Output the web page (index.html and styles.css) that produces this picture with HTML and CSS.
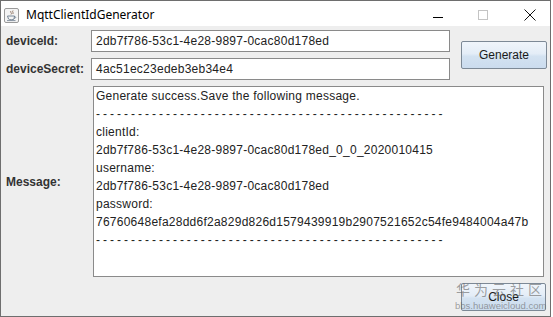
FILE: index.html
```html
<!DOCTYPE html>
<html>
<head>
<meta charset="utf-8">
<link rel="stylesheet" href="styles.css">
</head>
<body>
<div class="window">
  <div class="titlebar">
    <span class="app-icon">
      <svg width="15" height="15" viewBox="0 0 15 15">
        <rect x="0.5" y="0.5" width="14" height="14" rx="1.5" fill="#f4f4f4" stroke="#9a9a9a"/>
        <path d="M7 3 C5.5 4.2 8.5 5 7 6.5 M9 2.5 C7.8 3.8 10 4.6 8.8 6" fill="none" stroke="#8a6d5a" stroke-width="0.9"/>
        <path d="M3.5 8 L10.5 8 L10 11 C9.5 12 5 12 4.5 11 Z" fill="none" stroke="#6a7a8c" stroke-width="0.9"/>
        <path d="M10.4 8.6 C12.2 8.4 12.2 10.2 10.1 10.3" fill="none" stroke="#6a7a8c" stroke-width="0.8"/>
        <path d="M3 12.6 L11.5 12.6" stroke="#6a7a8c" stroke-width="0.8"/>
      </svg>
    </span>
    <span class="title">MqttClientIdGenerator</span>
    <div class="controls">
      <span class="ctl">
        <svg width="10" height="10" viewBox="0 0 10 10"><path d="M0 5.5 H10" stroke="#000" stroke-width="1"/></svg>
      </span>
      <span class="ctl">
        <svg width="10" height="10" viewBox="0 0 10 10"><rect x="0.5" y="0.5" width="9" height="9" fill="none" stroke="#c4c4c4" stroke-width="1"/></svg>
      </span>
      <span class="ctl">
        <svg width="12" height="12" viewBox="0 0 12 12"><path d="M0.5 0.5 L11.5 11.5 M11.5 0.5 L0.5 11.5" stroke="#111" stroke-width="1"/></svg>
      </span>
    </div>
  </div>
  <div class="content">
    <label class="lbl row1">deviceId:</label>
    <div class="field row1">2db7f786-53c1-4e28-9897-0cac80d178ed</div>
    <button class="btn gen">Generate</button>
    <label class="lbl row2">deviceSecret:</label>
    <div class="field row2">4ac51ec23edeb3eb34e4</div>
    <label class="lbl row3">Message:</label>
    <div class="textarea">
      <div class="line">Generate success.Save the following message.</div>
      <div class="line dash">- - - - - - - - - - - - - - - - - - - - - - - - - - - - - - - - - - - - - - - - - - - - - - - - - -</div>
      <div class="line">clientId:</div>
      <div class="line">2db7f786-53c1-4e28-9897-0cac80d178ed_0_0_2020010415</div>
      <div class="line">username:</div>
      <div class="line">2db7f786-53c1-4e28-9897-0cac80d178ed</div>
      <div class="line">password:</div>
      <div class="line">76760648efa28dd6f2a829d826d1579439919b2907521652c54fe9484004a47b</div>
      <div class="line dash">- - - - - - - - - - - - - - - - - - - - - - - - - - - - - - - - - - - - - - - - - - - - - - - - - -</div>
    </div>
    <button class="btn close">Close</button>
  </div>
  <div class="watermark">
    <div class="wm-cn">华为云社区</div>
    <div class="wm-url">bbs.huaweicloud.com</div>
  </div>
</div>
</body>
</html>
```

FILE: styles.css
```css
html, body {
  margin: 0;
  padding: 0;
  background: #ffffff;
}

.window {
  position: relative;
  width: 551px;
  height: 317px;
  box-sizing: border-box;
  border: 1px solid #6e6e6e;
  background: #eeeeee;
  overflow: hidden;
}

.titlebar {
  height: 25px;
  background: #ffffff;
  display: flex;
  align-items: center;
}

.app-icon {
  width: 15px;
  height: 15px;
  margin-left: 3px;
  margin-top: 4px;
  display: flex;
}

.title {
  margin-left: 7px;
  margin-top: 2px;
  font-family: "Noto Sans", "Open Sans", sans-serif;
  font-size: 12px;
  color: #000000;
}

.controls {
  margin-left: auto;
  display: flex;
  height: 25px;
}

.ctl {
  width: 45px;
  height: 25px;
  display: flex;
  align-items: center;
  justify-content: center;
  padding-top: 3px;
  box-sizing: border-box;
}

.ctl:first-child {
  padding-top: 6px;
}

.ctl:last-child {
  padding-left: 4px;
}

.content {
  display: grid;
  grid-template-columns: 74px 359px 86px;
  grid-template-rows: 22px 22px 191px 28px;
  column-gap: 11px;
  row-gap: 6px;
  padding: 4px 0 0 5px;
  font-family: "Liberation Sans", Arial, sans-serif;
  font-size: 12px;
  color: #333333;
}

.lbl {
  grid-column: 1;
  font-weight: bold;
  align-self: center;
  white-space: nowrap;
  color: #333333;
}

.row1 { grid-row: 1; }
.row2 { grid-row: 2; }
.row3 { grid-row: 3; }

.field {
  grid-column: 2;
  background: #ffffff;
  border: 1px solid #8a8a8a;
  box-sizing: border-box;
  padding: 0 4px;
  display: flex;
  align-items: center;
  letter-spacing: 0.25px;
  color: #222222;
}

.btn {
  font-family: "Liberation Sans", Arial, sans-serif;
  font-size: 12px;
  color: #1a1a1a;
  border: 1px solid #7d8996;
  border-radius: 2px;
  background: linear-gradient(#f0f5fb 0%, #e4edf7 45%, #d3e2f1 55%, #cbdcee 100%);
  padding: 0;
  box-sizing: border-box;
}

.gen {
  grid-column: 3;
  grid-row: 1 / 3;
  align-self: center;
  height: 28px;
}

.textarea {
  grid-column: 2 / 4;
  grid-row: 3;
  margin: 0 3px 0 2px;
  background: #ffffff;
  border: 1px solid #8a8a8a;
  box-sizing: border-box;
  padding: 0 2px;
  color: #222222;
  letter-spacing: 0.25px;
}

.line {
  height: 18px;
  line-height: 18px;
  white-space: pre;
}

.dash {
  letter-spacing: -0.17px;
}

.close {
  grid-column: 3;
  grid-row: 4;
  width: 85px;
  height: 28px;
}

.watermark {
  position: absolute;
  left: 454px;
  top: 280px;
  color: rgba(100, 100, 100, 0.6);
  pointer-events: none;
}

.wm-cn {
  font-family: "Noto Sans CJK SC", sans-serif;
  font-size: 14px;
  line-height: 17px;
  letter-spacing: 4px;
  padding-left: 1px;
}

.wm-url {
  font-family: "Liberation Sans", Arial, sans-serif;
  font-size: 9.5px;
  line-height: 12px;
  margin-top: 2px;
}
```
